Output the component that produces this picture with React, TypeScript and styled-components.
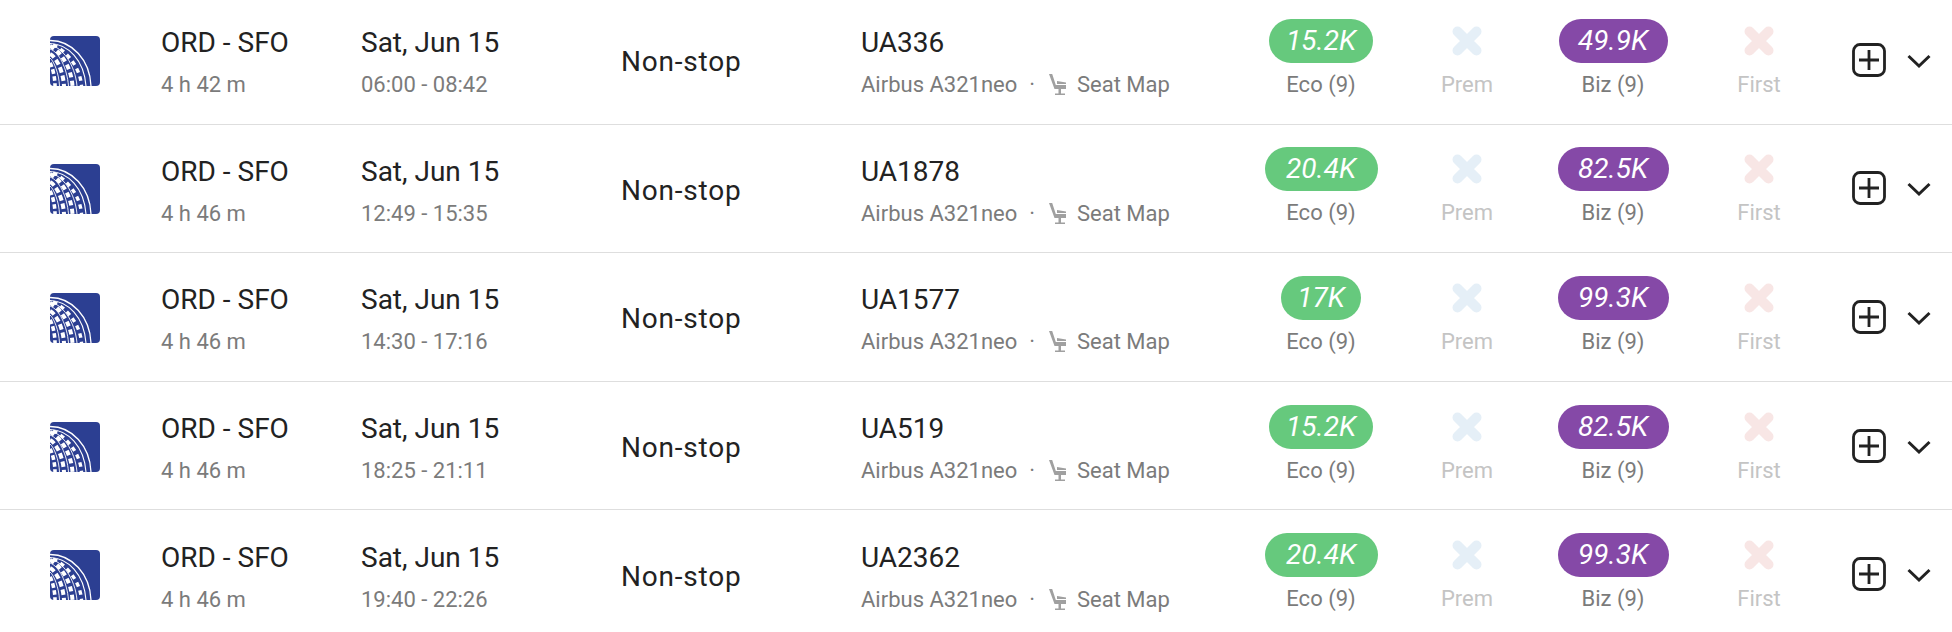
import React from "react";
import styled, { createGlobalStyle } from "styled-components";

const GlobalStyle = createGlobalStyle`
    html, body {
        margin: 0;
        padding: 0;
        background: #ffffff;
        overflow: hidden;
    }
    body {
        font-family: Roboto, "Liberation Sans", sans-serif;
    }
`;

const List = styled.div`
    width: 1952px;
    height: 632px;
    overflow: hidden;
`;

const Rows = styled.div`
    margin-top: -4px;
`;

const Row = styled.div`
    display: grid;
    grid-template-columns: 161px 200px 260px 240px 387px 146px 146px 146px 146px 1fr;
    align-items: center;
    height: 127.6px;
    border-bottom: 1px solid #dedede;
`;

const LogoCell = styled.div`
    padding: 2px 0 0 50px;
    display: flex;
    align-items: center;
`;

const Stack = styled.div`
    display: flex;
    flex-direction: column;
    gap: 12px;
    padding-top: 5px;
`;

const Primary = styled.div`
    font-size: 28px;
    line-height: 34px;
    color: #222222;
    white-space: nowrap;
`;

const Stops = styled(Primary)`
    padding-top: 5px;
    letter-spacing: 0.8px;
`;

const Secondary = styled.div`
    display: flex;
    align-items: center;
    font-size: 22px;
    line-height: 26px;
    color: #7b7b7b;
    white-space: nowrap;
`;

const Dot = styled.span`
    margin: 0 12px;
`;

const SeatIcon = styled.svg`
    width: 18px;
    height: 24px;
    margin: 0 10px 0 2px;
`;

const Cabin = styled.div`
    display: flex;
    flex-direction: column;
    align-items: center;
    gap: 9px;
    padding-bottom: 3px;
`;

const Pill = styled.div<{ $color: string; $width: number }>`
    width: ${(p) => p.$width}px;
    height: 44px;
    border-radius: 22px;
    background: ${(p) => p.$color};
    color: #ffffff;
    font-size: 28px;
    font-style: italic;
    line-height: 44px;
    text-align: center;
    white-space: nowrap;
`;

const Cross = styled.svg`
    display: block;
    width: 44px;
    height: 44px;
`;

const CabinLabel = styled.div<{ $muted?: boolean }>`
    font-size: 22px;
    line-height: 26px;
    color: ${(p) => (p.$muted ? "#c4c4c4" : "#7b7b7b")};
    white-space: nowrap;
`;

const Actions = styled.div`
    display: flex;
    align-items: center;
    gap: 21px;
    margin-left: 20px;
`;

const UnitedLogo = () => (
    <svg width="50" height="50" viewBox="0 0 50 50">
        <defs>
            <clipPath id="ua-box">
                <rect width="50" height="50" rx="4" />
            </clipPath>
        </defs>
        <g clipPath="url(#ua-box)">
            <rect width="50" height="50" fill="#2c3f92" />
            <g fill="none" stroke="#ffffff">
                <path d="M0 4.5C22 4.5 40 24 41 50" strokeWidth="1.3" />
                <path d="M0 7.5C18 8 34 24 36 50" strokeWidth="1.1" />
                <path d="M3 9C12 12 30 28 31.5 50" strokeWidth="3.4" strokeDasharray="4.5 4" />
                <path d="M0 10C8 14 21 28 22.5 50" strokeWidth="4" strokeDasharray="5 3.5" />
                <path d="M0 18C6 21 13 34 14 50" strokeWidth="4" strokeDasharray="5.5 3" />
                <path d="M0 27C2 30 5 40 5 50" strokeWidth="3.6" strokeDasharray="4.5 2.5" />
                <path d="M0 9C12 11 25 28 27 50" strokeWidth="0.9" />
                <path d="M0 13C9 16 17 32 18.5 50" strokeWidth="0.9" />
                <path d="M0 22C4 25 9 38 9.5 50" strokeWidth="0.9" />
            </g>
        </g>
    </svg>
);

const Seat = () => (
    <SeatIcon viewBox="0 0 18 24">
        <path d="M0 1h3.2l3.6 11H17v4H5.5z" fill="#a0a0a0" />
        <path d="M8 8l9 1.5V11H8z" fill="#a0a0a0" />
        <path d="M9.5 16H12v4.5H9.5zM6 20.5h10V22H6z" fill="#a0a0a0" />
    </SeatIcon>
);

const NoSeats = ({ color }: { color: string }) => (
    <Cross viewBox="0 0 44 44">
        <path d="M12.5 12.5L31.5 31.5M31.5 12.5L12.5 31.5" stroke={color} strokeWidth="10" strokeLinecap="round" />
    </Cross>
);

const PlusBox = () => (
    <svg width="34" height="34" viewBox="0 0 34 34" fill="none" stroke="#222222" strokeWidth="2.8">
        <rect x="1.5" y="1.5" width="31" height="31" rx="6.5" />
        <path d="M17 7v20M7 17h20" />
    </svg>
);

const Chevron = () => (
    <svg width="24" height="24" viewBox="0 0 24 24" fill="none" stroke="#222222" strokeWidth="3">
        <path d="M1.5 8L12 18L22.5 8" />
    </svg>
);

interface Fare {
    label: string;
    width: number;
}

interface Flight {
    duration: string;
    times: string;
    number: string;
    eco: Fare;
    biz: Fare;
}

const flights: Flight[] = [
    {
        duration: "4 h 42 m",
        times: "06:00 - 08:42",
        number: "UA336",
        eco: { label: "15.2K", width: 104 },
        biz: { label: "49.9K", width: 109 },
    },
    {
        duration: "4 h 46 m",
        times: "12:49 - 15:35",
        number: "UA1878",
        eco: { label: "20.4K", width: 113 },
        biz: { label: "82.5K", width: 111 },
    },
    {
        duration: "4 h 46 m",
        times: "14:30 - 17:16",
        number: "UA1577",
        eco: { label: "17K", width: 80 },
        biz: { label: "99.3K", width: 111 },
    },
    {
        duration: "4 h 46 m",
        times: "18:25 - 21:11",
        number: "UA519",
        eco: { label: "15.2K", width: 104 },
        biz: { label: "82.5K", width: 111 },
    },
    {
        duration: "4 h 46 m",
        times: "19:40 - 22:26",
        number: "UA2362",
        eco: { label: "20.4K", width: 113 },
        biz: { label: "99.3K", width: 111 },
    },
];

const App = () => (
    <List>
        <GlobalStyle />
        <Rows>
            {flights.map((f) => (
                <Row key={f.number}>
                    <LogoCell>
                        <UnitedLogo />
                    </LogoCell>
                    <Stack>
                        <Primary>ORD - SFO</Primary>
                        <Secondary>{f.duration}</Secondary>
                    </Stack>
                    <Stack>
                        <Primary>Sat, Jun 15</Primary>
                        <Secondary>{f.times}</Secondary>
                    </Stack>
                    <Stops>Non-stop</Stops>
                    <Stack>
                        <Primary>{f.number}</Primary>
                        <Secondary>
                            Airbus A321neo<Dot>·</Dot>
                            <Seat />
                            Seat Map
                        </Secondary>
                    </Stack>
                    <Cabin>
                        <Pill $color="#66c97d" $width={f.eco.width}>
                            {f.eco.label}
                        </Pill>
                        <CabinLabel>Eco (9)</CabinLabel>
                    </Cabin>
                    <Cabin>
                        <NoSeats color="#e5eff7" />
                        <CabinLabel $muted>Prem</CabinLabel>
                    </Cabin>
                    <Cabin>
                        <Pill $color="#8549a7" $width={f.biz.width}>
                            {f.biz.label}
                        </Pill>
                        <CabinLabel>Biz (9)</CabinLabel>
                    </Cabin>
                    <Cabin>
                        <NoSeats color="#f8e6e5" />
                        <CabinLabel $muted>First</CabinLabel>
                    </Cabin>
                    <Actions>
                        <PlusBox />
                        <Chevron />
                    </Actions>
                </Row>
            ))}
        </Rows>
    </List>
);

export default App;
